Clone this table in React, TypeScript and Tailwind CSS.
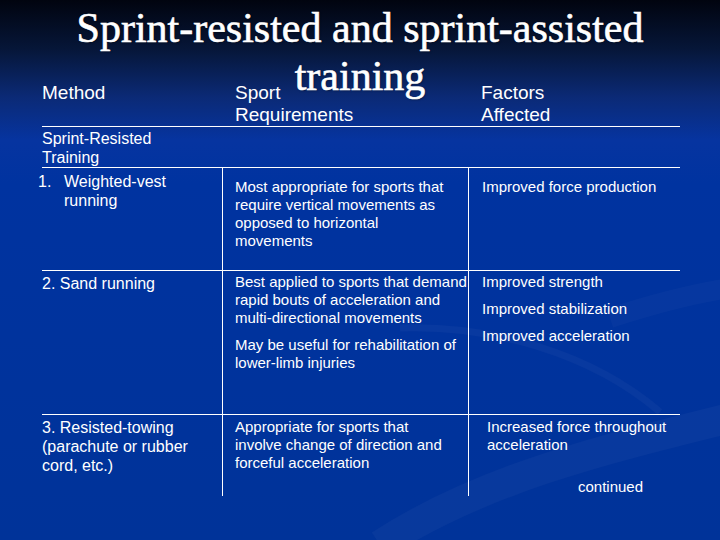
import React from 'react'

// column grid shared by the table rows: 42..222 | 222..468 | 468..680
const cols = 'grid grid-cols-[180px_246px_212px]'

function Swoosh() {
  return (
    <svg
      className="pointer-events-none absolute inset-0"
      width="720"
      height="540"
      viewBox="0 0 720 540"
      fill="none"
    >
      <path d="M380 545 C 480 480, 600 450, 730 418" stroke="#ffffff" strokeOpacity="0.03" strokeWidth="30" />
      <path d="M400 328 C 490 325, 590 352, 660 412" stroke="#ffffff" strokeOpacity="0.03" strokeWidth="7" />
      <path d="M610 318 C 650 305, 690 294, 730 288" stroke="#ffffff" strokeOpacity="0.025" strokeWidth="20" />
    </svg>
  )
}

export default function App() {
  return (
    <div className="relative h-[540px] w-[720px] overflow-hidden bg-[linear-gradient(180deg,#01040f_0%,#061638_9%,#0b2a76_18%,#0634a0_26%,#0033a0_34%,#003399_100%)] font-['Liberation_Sans',Arial,sans-serif] text-white">
      <Swoosh />

      <div className="relative grid">
        {/* Table */}
        <div className="col-start-1 row-start-1 pl-[42px] pt-[82px]">
          <div className="w-[638px]">
            {/* Header */}
            <div className={`${cols} h-[45px] border-b border-white text-[19px] leading-[22px]`}>
              <div>Method</div>
              <div className="pl-[13px]">
                Sport
                <br />
                Requirements
              </div>
              <div className="pl-[13px]">
                Factors
                <br />
                Affected
              </div>
            </div>

            {/* Section label */}
            <div className="h-[41px] border-b border-white pt-[2px] text-[16px] leading-[19px]">
              Sprint-Resisted
              <br />
              Training
            </div>

            {/* 1. Weighted-vest running */}
            <div className={`${cols} h-[103px] border-b border-white`}>
              <div className="flex pt-[4px] text-[16px] leading-[19px]">
                <span className="-ml-[4px] w-[26px] shrink-0">1.</span>
                <span>
                  Weighted-vest
                  <br />
                  running
                </span>
              </div>
              <div className="whitespace-nowrap border-l border-white pl-[12px] pt-[10px] text-[15px] leading-[18px]">
                Most appropriate for sports that
                <br />
                require vertical movements as
                <br />
                opposed to horizontal
                <br />
                movements
              </div>
              <div className="whitespace-nowrap border-l border-white pl-[13px] pt-[10px] text-[15px] leading-[18px]">
                Improved force production
              </div>
            </div>

            {/* 2. Sand running */}
            <div className={`${cols} h-[144px] border-b border-white`}>
              <div className="pt-[3px] text-[16px] leading-[19px]">2. Sand running</div>
              <div className="flex flex-col gap-[9px] whitespace-nowrap border-l border-white pl-[12px] pt-[2px] text-[15px] leading-[18px]">
                <p>
                  Best applied to sports that demand
                  <br />
                  rapid bouts of acceleration and
                  <br />
                  multi-directional movements
                </p>
                <p>
                  May be useful for rehabilitation of
                  <br />
                  lower-limb injuries
                </p>
              </div>
              <div className="flex flex-col gap-[9px] whitespace-nowrap border-l border-white pl-[13px] pt-[2px] text-[15px] leading-[18px]">
                <p>Improved strength</p>
                <p>Improved stabilization</p>
                <p>Improved acceleration</p>
              </div>
            </div>

            {/* 3. Resisted-towing */}
            <div className={`${cols} h-[78px]`}>
              <div className="pt-[3px] text-[16px] leading-[19px]">
                3. Resisted-towing
                <br />
                (parachute or rubber
                <br />
                cord, etc.)
              </div>
              <div className="whitespace-nowrap border-l border-white pl-[12px] pt-[3px] text-[15px] leading-[18px]">
                Appropriate for sports that
                <br />
                involve change of direction and
                <br />
                forceful acceleration
              </div>
              <div className="whitespace-nowrap border-l border-white pl-[18px] pt-[3px] text-[15px] leading-[18px]">
                Increased force throughout
                <br />
                acceleration
                <p className="ml-[91px] mt-[24px]">continued</p>
              </div>
            </div>
          </div>
        </div>

        {/* Title */}
        <h1 className="col-start-1 row-start-1 pt-[4px] text-center font-['Liberation_Serif','Times_New_Roman',serif] text-[42px] leading-[48px] [-webkit-text-stroke:0.6px_#ffffff] [text-shadow:1px_1px_2px_rgba(0,0,0,0.35)]">
          Sprint-resisted and sprint-assisted
          <br />
          training
        </h1>
      </div>
    </div>
  )
}
